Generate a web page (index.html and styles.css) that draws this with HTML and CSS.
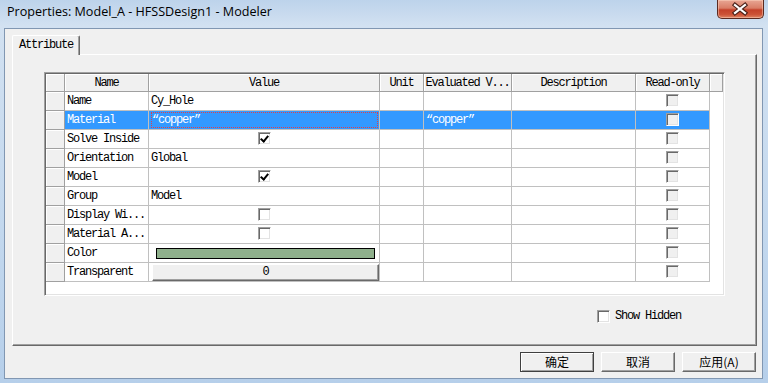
FILE: index.html
```html
<!DOCTYPE html>
<html lang="en">
<head>
    <meta charset="UTF-8">
    <title>Properties: Model_A - HFSSDesign1 - Modeler</title>
    <link rel="stylesheet" href="styles.css">
</head>
<body>

    <div class="window">

        <div class="titlebar">
            <span class="title">Properties: Model_A - HFSSDesign1 - Modeler</span>
            <button class="close-btn" title="Close">
                <svg width="47" height="19" viewBox="0 0 47 19">
                    <path d="M19 5 L29 13 M29 5 L19 13" stroke="#4a2018" stroke-width="4.4" stroke-linecap="square" fill="none"/>
                    <path d="M19 5 L29 13 M29 5 L19 13" stroke="#fff" stroke-width="2.2" stroke-linecap="square" fill="none"/>
                </svg>
            </button>
        </div>

        <div class="client">

            <div class="tabs">
                <div class="tab active">Attribute</div>
            </div>

            <div class="tab-panel">

                <div class="grid-box">
                    <table class="prop-grid">
                        <colgroup>
                            <col class="c-hdr">
                            <col class="c-name">
                            <col class="c-value">
                            <col class="c-unit">
                            <col class="c-eval">
                            <col class="c-desc">
                            <col class="c-ro">
                            <col class="c-fill">
                        </colgroup>
                        <thead>
                            <tr>
                                <th class="row-hdr"></th>
                                <th>Name</th>
                                <th>Value</th>
                                <th>Unit</th>
                                <th>Evaluated V...</th>
                                <th>Description</th>
                                <th>Read-only</th>
                                <th></th>
                            </tr>
                        </thead>
                        <tbody>
                            <tr>
                                <td class="row-hdr"></td>
                                <td>Name</td>
                                <td>Cy_Hole</td>
                                <td></td><td></td><td></td>
                                <td class="center"><span class="checkbox disabled"></span></td>
                            </tr>
                            <tr class="selected">
                                <td class="row-hdr"></td>
                                <td>Material</td>
                                <td class="editing"><div class="focus-rect">&ldquo;copper&rdquo;</div></td>
                                <td></td>
                                <td>&ldquo;copper&rdquo;</td>
                                <td></td>
                                <td class="center"><span class="checkbox disabled"></span></td>
                            </tr>
                            <tr>
                                <td class="row-hdr"></td>
                                <td>Solve Inside</td>
                                <td class="center"><span class="checkbox checked"></span></td>
                                <td></td><td></td><td></td>
                                <td class="center"><span class="checkbox disabled"></span></td>
                            </tr>
                            <tr>
                                <td class="row-hdr"></td>
                                <td>Orientation</td>
                                <td>Global</td>
                                <td></td><td></td><td></td>
                                <td class="center"><span class="checkbox disabled"></span></td>
                            </tr>
                            <tr>
                                <td class="row-hdr"></td>
                                <td>Model</td>
                                <td class="center"><span class="checkbox checked"></span></td>
                                <td></td><td></td><td></td>
                                <td class="center"><span class="checkbox disabled"></span></td>
                            </tr>
                            <tr>
                                <td class="row-hdr"></td>
                                <td>Group</td>
                                <td>Model</td>
                                <td></td><td></td><td></td>
                                <td class="center"><span class="checkbox disabled"></span></td>
                            </tr>
                            <tr>
                                <td class="row-hdr"></td>
                                <td>Display Wi...</td>
                                <td class="center"><span class="checkbox"></span></td>
                                <td></td><td></td><td></td>
                                <td class="center"><span class="checkbox disabled"></span></td>
                            </tr>
                            <tr>
                                <td class="row-hdr"></td>
                                <td>Material A...</td>
                                <td class="center"><span class="checkbox"></span></td>
                                <td></td><td></td><td></td>
                                <td class="center"><span class="checkbox disabled"></span></td>
                            </tr>
                            <tr>
                                <td class="row-hdr"></td>
                                <td>Color</td>
                                <td><div class="color-swatch"></div></td>
                                <td></td><td></td><td></td>
                                <td class="center"><span class="checkbox disabled"></span></td>
                            </tr>
                            <tr>
                                <td class="row-hdr"></td>
                                <td>Transparent</td>
                                <td><div class="cell-button">0</div></td>
                                <td></td><td></td><td></td>
                                <td class="center"><span class="checkbox disabled"></span></td>
                            </tr>
                        </tbody>
                    </table>
                </div>

                <div class="show-hidden">
                    <span class="checkbox"></span>
                    <span>Show Hidden</span>
                </div>

            </div>

            <div class="buttons">
                <button class="btn default">确定</button>
                <button class="btn">取消</button>
                <button class="btn">应用(A)</button>
            </div>

        </div>
    </div>

</body>
</html>
```

FILE: styles.css
```css
* {
    margin: 0;
    padding: 0;
    box-sizing: border-box;
}

body {
    width: 768px;
    height: 383px;
    overflow: hidden;
    font-family: "Liberation Mono", monospace;
    font-size: 12px;
    font-weight: 400;
    letter-spacing: -1.2px;
    color: #000;
    background-color: #b9d1ea;
}

.window {
    height: 383px;
    display: flex;
    flex-direction: column;
    background: linear-gradient(to bottom, #bdd3eb 0, #d2e1f1 26px, #c3d8ee 60%, #b6cfea 100%);
}

/* title bar */
.titlebar {
    height: 28px;
    display: flex;
    align-items: flex-start;
}

    .titlebar .title {
        padding: 4px 0 0 7px;
        font-family: "Open Sans", "Noto Sans", sans-serif;
        font-size: 12.6px;
        letter-spacing: 0;
        line-height: 16px;
        color: #000;
    }

.close-btn {
    margin-left: auto;
    margin-right: 4px;
    width: 47px;
    height: 19px;
    border: 1px solid #5b2a21;
    border-top: none;
    border-radius: 0 0 5px 5px;
    background: linear-gradient(to bottom, #e8a694 0, #d97d66 45%, #c4412a 55%, #cc5236 80%, #de8463 100%);
    box-shadow: inset 0 0 0 1px rgba(255, 220, 200, 0.45);
    display: flex;
    align-items: center;
    justify-content: center;
}

    .close-btn svg {
        display: block;
        margin-left: -2px;
    }

/* client area */
.client {
    height: 351px;
    margin: 0 5px 0 4px;
    border: 1px solid #8197b2;
    background-color: #f0f0f0;
    display: flex;
    flex-direction: column;
}

.tabs {
    display: flex;
    padding: 6px 0 0 7px;
}

.tab {
    position: relative;
    z-index: 1;
    height: 20px;
    margin-bottom: -1px;
    padding: 2px 6px 0 6px;
    line-height: 14px;
    background-color: #f0f0f0;
    border-top: 1px solid #fff;
    border-left: 1px solid #fff;
    border-right: 1px solid #696969;
    border-radius: 2px 2px 0 0;
    box-shadow: inset -1px 0 #a0a0a0;
}

.tab-panel {
    height: 292px;
    margin: 0 5px 0 7px;
    border-top: 1px solid #fff;
    border-left: 1px solid #fff;
    border-right: 1px solid #696969;
    border-bottom: 1px solid #696969;
    box-shadow: inset -1px -1px #a0a0a0;
    display: flex;
    flex-direction: column;
}

/* property grid */
.grid-box {
    width: 681px;
    height: 224px;
    margin: 17px 0 0 31px;
    background-color: #fff;
    border-top: 1px solid #a0a0a0;
    border-left: 1px solid #a0a0a0;
    border-right: 1px solid #fff;
    border-bottom: 1px solid #fff;
    box-shadow: inset 1px 1px #696969, inset -1px -1px #e3e3e3;
    padding: 1px 0 0 1px;
}

.prop-grid {
    table-layout: fixed;
    border-collapse: separate;
    border-spacing: 0;
    width: 677px;
}

    .prop-grid col.c-hdr { width: 19px; }
    .prop-grid col.c-name { width: 84px; }
    .prop-grid col.c-value { width: 231px; }
    .prop-grid col.c-unit { width: 44px; }
    .prop-grid col.c-eval { width: 88px; }
    .prop-grid col.c-desc { width: 124px; }
    .prop-grid col.c-ro { width: 74px; }
    .prop-grid col.c-fill { width: 13px; }

    .prop-grid th {
        height: 18px;
        padding: 0;
        font-weight: 400;
        text-align: center;
        white-space: nowrap;
        overflow: hidden;
        line-height: 16px;
        background-color: #f0f0f0;
        border-right: 1px solid #a0a0a0;
        border-bottom: 1px solid #a0a0a0;
        box-shadow: inset 1px 1px #fff;
    }

    .prop-grid td {
        height: 19px;
        padding: 0 0 0 2px;
        line-height: 17px;
        white-space: nowrap;
        overflow: hidden;
        vertical-align: middle;
        border-right: 1px solid #c0c0c0;
        border-bottom: 1px solid #c0c0c0;
    }

        .prop-grid td.center {
            text-align: center;
            padding: 0;
        }

        .prop-grid td.row-hdr,
        .prop-grid th.row-hdr {
            padding: 0;
            background-color: #f0f0f0;
            border-right: 1px solid #a0a0a0;
            border-bottom: 1px solid #a0a0a0;
            box-shadow: inset 1px 1px #fff;
        }

    .prop-grid tr.selected td {
        background-color: #3399ff;
        color: #fff;
    }

        .prop-grid tr.selected td.row-hdr {
            background-color: #f0f0f0;
        }

    .prop-grid td.editing {
        padding: 0 1px 0 2px;
    }

.focus-rect {
    height: 16px;
    line-height: 14px;
    padding-left: 0;
    border: 1px dotted #e0404a;
}

.color-swatch {
    height: 11px;
    margin: 0 4px 0 5px;
    background-color: #8fb08c;
    border: 1px solid #000;
}

.cell-button {
    height: 17px;
    margin-left: 1px;
    line-height: 15px;
    text-align: center;
    background-color: #f0f0f0;
    border-top: 1px solid #fff;
    border-left: 1px solid #fff;
    border-right: 1px solid #696969;
    border-bottom: 1px solid #696969;
    box-shadow: inset -1px -1px #a0a0a0;
}

/* check boxes */
.checkbox {
    display: inline-block;
    width: 13px;
    height: 13px;
    vertical-align: middle;
    background-color: #fff;
    border-top: 1px solid #a0a0a0;
    border-left: 1px solid #a0a0a0;
    border-right: 1px solid #fff;
    border-bottom: 1px solid #fff;
    box-shadow: inset 1px 1px #696969, inset -1px -1px #e3e3e3;
    position: relative;
}

    .checkbox.disabled {
        background-color: #f0f0f0;
    }

    .checkbox.checked::after {
        content: "";
        position: absolute;
        left: 3px;
        top: 1px;
        width: 3px;
        height: 6px;
        border-right: 2px solid #000;
        border-bottom: 2px solid #000;
        transform: rotate(40deg);
    }

.show-hidden {
    display: flex;
    align-items: center;
    justify-content: flex-end;
    gap: 5px;
    margin-top: 13px;
    padding-right: 75px;
    line-height: 14px;
}

/* dialog buttons */
.buttons {
    display: flex;
    justify-content: flex-end;
    gap: 7px;
    padding: 6px 6px 0 0;
}

.btn {
    width: 74px;
    height: 20px;
    font-family: "Noto Sans CJK SC", sans-serif;
    font-size: 12px;
    letter-spacing: 0;
    line-height: 16px;
    color: #000;
    background-color: #f0f0f0;
    border-top: 1px solid #fff;
    border-left: 1px solid #fff;
    border-right: 1px solid #696969;
    border-bottom: 1px solid #696969;
    box-shadow: inset -1px -1px #a0a0a0;
}

    .btn.default {
        border: 1px solid #404040;
        box-shadow: inset 1px 1px #fff, inset -1px -1px #a0a0a0;
    }
```
